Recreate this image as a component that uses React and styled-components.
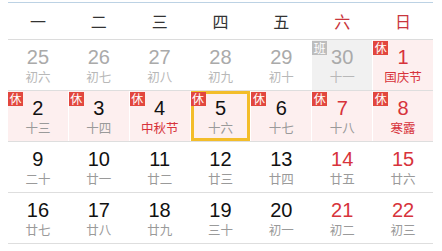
import React from "react";
import styled, { createGlobalStyle, css } from "styled-components";

const Global = createGlobalStyle`
  html, body { margin: 0; padding: 0; background: #fff; }
  body { font-family: "Liberation Sans", "Noto Sans CJK SC", sans-serif; }
`;

const Calendar = styled.div`
  margin: 2px 0 0 8px;
  width: 425px;
  border-top: 1px solid #bcd2e4;
`;

const HeaderRow = styled.div`
  display: grid;
  grid-template-columns: repeat(7, 1fr);
  column-gap: 1px;
  height: 36px;
  border-bottom: 1px solid #dcdcdc;
`;

const HeadCell = styled.div`
  display: flex;
  align-items: center;
  justify-content: center;
  font-family: "Noto Sans CJK SC", sans-serif;
  font-size: 16px;
  color: ${(p) => (p.$weekend ? "#c9363d" : "#333")};
`;

const WeekRow = styled.div`
  display: grid;
  grid-template-columns: repeat(7, 1fr);
  column-gap: 1px;
  height: 50px;
  border-bottom: 1px solid #dedede;
`;

const Cell = styled.div`
  position: relative;
  box-sizing: border-box;
  display: flex;
  flex-direction: column;
  align-items: center;
  padding-top: 6px;
  background: ${(p) =>
    p.$kind === "off" ? "#fdefef" : p.$kind === "work" ? "#f1f1f1" : "#fff"};
  ${(p) =>
    p.$today &&
    css`
      box-shadow: inset 0 0 0 3px #f3bd2a;
    `}
`;

const Day = styled.div`
  font-family: "Liberation Sans", sans-serif;
  font-size: 20px;
  line-height: 22px;
  color: ${(p) => (p.$tone === "prev" ? "#aaaaaa" : p.$tone === "red" ? "#d7333b" : "#111")};
`;

const Lunar = styled.div`
  font-family: "Noto Sans CJK SC", sans-serif;
  font-size: 12.5px;
  line-height: 16px;
  margin-top: 1px;
  color: ${(p) => (p.$tone === "prev" ? "#b8b8b8" : p.$tone === "red" ? "#d7333b" : "#9a9a9a")};
`;

const Badge = styled.span`
  position: absolute;
  top: 1px;
  left: 0;
  width: 15px;
  height: 14px;
  display: flex;
  align-items: center;
  justify-content: center;
  font-family: "Noto Sans CJK SC", sans-serif;
  font-size: 12px;
  line-height: 14px;
  color: #fff;
  background: ${(p) => (p.$work ? "#bdbdbd" : "#e2473e")};
  z-index: 1;
`;

const heads = ["一", "二", "三", "四", "五", "六", "日"];

const P = (d, l) => ({ d, l, prev: true });
const weeks = [
  [
    P(25, "初六"),
    P(26, "初七"),
    P(27, "初八"),
    P(28, "初九"),
    P(29, "初十"),
    { d: 30, l: "十一", prev: true, work: true },
    { d: 1, l: "国庆节", off: true, fest: true },
  ],
  [
    { d: 2, l: "十三", off: true },
    { d: 3, l: "十四", off: true },
    { d: 4, l: "中秋节", off: true, fest: true },
    { d: 5, l: "十六", off: true, today: true },
    { d: 6, l: "十七", off: true },
    { d: 7, l: "十八", off: true },
    { d: 8, l: "寒露", off: true, fest: true },
  ],
  [
    { d: 9, l: "二十" },
    { d: 10, l: "廿一" },
    { d: 11, l: "廿二" },
    { d: 12, l: "廿三" },
    { d: 13, l: "廿四" },
    { d: 14, l: "廿五" },
    { d: 15, l: "廿六" },
  ],
  [
    { d: 16, l: "廿七" },
    { d: 17, l: "廿八" },
    { d: 18, l: "廿九" },
    { d: 19, l: "三十" },
    { d: 20, l: "初一" },
    { d: 21, l: "初二" },
    { d: 22, l: "初三" },
  ],
];

export default function App() {
  return (
    <>
      <Global />
      <Calendar>
        <HeaderRow>
          {heads.map((h, i) => (
            <HeadCell key={h} $weekend={i >= 5}>
              {h}
            </HeadCell>
          ))}
        </HeaderRow>
        {weeks.map((w, wi) => (
          <WeekRow key={wi}>
            {w.map((c, ci) => {
              const weekend = ci >= 5;
              const dayTone = c.prev ? "prev" : weekend ? "red" : "normal";
              const lunarTone = c.fest ? "red" : c.prev ? "prev" : "normal";
              const kind = c.work ? "work" : c.off ? "off" : "plain";
              return (
                <Cell key={ci} $kind={kind} $today={c.today}>
                  {c.off && <Badge>休</Badge>}
                  {c.work && <Badge $work>班</Badge>}
                  <Day $tone={dayTone}>{c.d}</Day>
                  <Lunar $tone={lunarTone}>{c.l}</Lunar>
                </Cell>
              );
            })}
          </WeekRow>
        ))}
      </Calendar>
    </>
  );
}
